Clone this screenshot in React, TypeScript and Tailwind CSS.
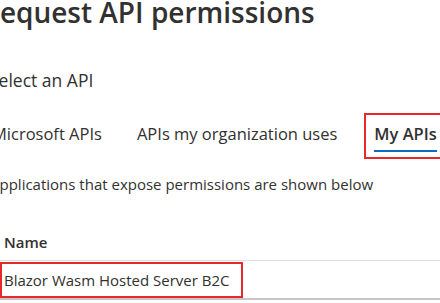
export default function App() {
  return (
    <div className="h-[303px] w-[440px] overflow-hidden bg-white font-['Open_Sans',sans-serif] text-[#323130]">
      {/* Header */}
      <h1 className="-ml-[18px] mt-[-7px] whitespace-nowrap text-[28px] font-semibold leading-[38px]">
        Request API permissions
      </h1>

      <p className="-ml-[11px] mt-[37px] whitespace-nowrap text-[17.5px] leading-[24px]">
        Select an API
      </p>

      {/* Tabs */}
      <div className="mt-[21px] flex items-stretch whitespace-nowrap text-[16.5px]">
        <div className="-ml-[8px] flex h-[46px] items-center pb-[4px]">Microsoft APIs</div>
        <div className="ml-[35px] flex h-[46px] items-center pb-[4px]">
          APIs my organization uses
        </div>
        <div className="ml-[27px] flex h-[46px] items-stretch border-2 border-[#e8262b] px-[8px]">
          <div className="relative flex items-center pb-[4px] font-semibold">
            My APIs
            <span className="absolute inset-x-0 bottom-[5px] h-[2px] bg-[#0f6cbd]" />
          </div>
        </div>
      </div>

      <p className="-ml-[10px] mt-[15px] whitespace-nowrap text-[15px] leading-[20px]">
        Applications that expose permissions are shown below
      </p>

      {/* Table */}
      <div className="mt-[38px] text-[15px]">
        <div className="border-b border-[#e1dfdd] pb-[8px] pl-[4px] font-semibold leading-[20px]">
          Name
        </div>
        <div className="border-b-2 border-[#c8c6c4] pt-[1px]">
          <div className="flex h-[36px] w-[243px] items-center border-2 border-[#e8262b] pl-[2px] pt-[1px] whitespace-nowrap">
            Blazor Wasm Hosted Server B2C
          </div>
        </div>
      </div>
    </div>
  );
}
